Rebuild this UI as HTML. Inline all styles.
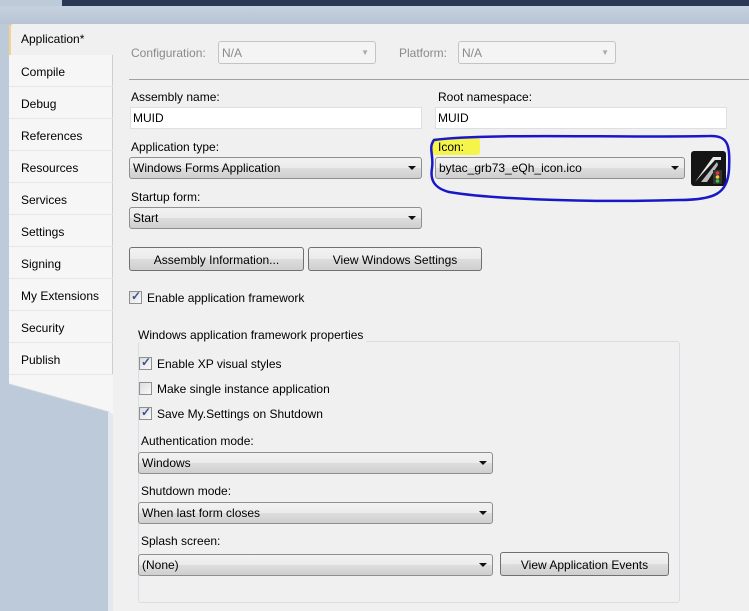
<!DOCTYPE html>
<html><head><style>
*{box-sizing:border-box}
body{margin:0;width:749px;height:611px;overflow:hidden;background:#bccada;font-family:"Liberation Sans",sans-serif;font-size:12px;color:#000;position:relative}
.a{position:absolute}
.lbl{position:absolute;font-size:12px;white-space:nowrap}
.tb{position:absolute;left:130px;width:292px;height:22px;background:#fff;border:1px solid #dcdfe4;padding:3px 2px}
.dd{position:absolute;height:22px;border:1px solid #8e8f8f;border-radius:3px;background:linear-gradient(#f2f2f2,#ebebeb 50%,#dddddd 51%,#cfcfcf);padding:3px 3px;white-space:nowrap}
.dd:after{content:"";position:absolute;right:5px;top:8px;border-left:4px solid transparent;border-right:4px solid transparent;border-top:4px solid #111}
.btn{position:absolute;height:24px;border:1px solid #707070;border-radius:3px;background:linear-gradient(#f2f2f2,#ebebeb 50%,#dddddd 51%,#cfcfcf);text-align:center;padding-top:5px}
.cb{position:absolute;width:13px;height:13px;border:1px solid #8f8f8f;background:linear-gradient(135deg,#dcdcdc,#fafafa)}
.cb.c:after{content:"✓";position:absolute;left:1px;top:-3px;font-size:12px;font-weight:bold;color:#3b4f9a}
.tab{position:absolute;left:9px;width:104px;height:32px;border-bottom:1px solid #e6e6e6;padding:10px 0 0 12px}
</style></head><body>
<div class="a" style="left:62px;top:0;width:687px;height:6px;background:#293955"></div>
<div class="a" style="left:0;top:6px;width:749px;height:18px;background:linear-gradient(#c6d1de,#b8c4d4)"></div>
<div class="a" style="left:108px;top:24px;width:5px;height:587px;background:#e4e9ef"></div>
<!-- tab column -->
<div class="a" style="left:9px;top:24px;width:104px;height:351px;background:#f6f6f6;border-right:1px solid #c9ced6;border-radius:4px 0 0 0"></div>
<svg class="a" style="left:9px;top:374px" width="105" height="40"><polygon points="0,0 104,0 104,40 100,38 0,10" fill="#f6f6f6"/><line x1="0" y1="10" x2="100" y2="38" stroke="#d0d4da"/></svg>
<div class="a" style="left:113px;top:24px;width:636px;height:587px;background:#f0f0f0"></div>
<div class="a" style="left:9px;top:24px;width:106px;height:31px;background:#f0f0f0;border-left:2px solid #f3d48a;border-radius:4px 0 0 0"></div>
<div class="lbl" style="left:21px;top:32px">Application*</div>
<div class="tab" style="top:55px">Compile</div>
<div class="tab" style="top:87px">Debug</div>
<div class="tab" style="top:119px">References</div>
<div class="tab" style="top:151px">Resources</div>
<div class="tab" style="top:183px">Services</div>
<div class="tab" style="top:215px">Settings</div>
<div class="tab" style="top:247px">Signing</div>
<div class="tab" style="top:279px">My Extensions</div>
<div class="tab" style="top:311px">Security</div>
<div class="tab" style="top:343px">Publish</div>
<!-- config -->
<div class="lbl" style="left:131px;top:46px;color:#8a8a8a">Configuration:</div>
<div class="a" style="left:218px;top:41px;width:158px;height:23px;border:1px solid #c4c4c4;border-radius:3px;background:#f4f4f4;color:#8a8a8a;padding:4px 3px">N/A<span style="position:absolute;right:6px;top:6px;font-size:8px;color:#aaa">▼</span></div>
<div class="lbl" style="left:399px;top:46px;color:#8a8a8a">Platform:</div>
<div class="a" style="left:458px;top:41px;width:158px;height:23px;border:1px solid #c4c4c4;border-radius:3px;background:#f4f4f4;color:#8a8a8a;padding:4px 3px">N/A<span style="position:absolute;right:6px;top:6px;font-size:8px;color:#aaa">▼</span></div>
<div class="a" style="left:129px;top:79px;width:620px;height:1px;background:#a0a0a0"></div>
<div class="lbl" style="left:131px;top:90px">Assembly name:</div>
<div class="tb" style="top:107px">MUID</div>
<div class="lbl" style="left:438px;top:90px">Root namespace:</div>
<div class="tb" style="left:435px;top:107px">MUID</div>
<div class="lbl" style="left:131px;top:140px">Application type:</div>
<div class="dd" style="left:129px;top:157px;width:293px">Windows Forms Application</div>
<div class="a" style="left:432px;top:138px;width:48px;height:17px;background:#f4f44a;border-radius:3px"></div>
<div class="lbl" style="left:438px;top:140px">Icon:</div>
<div class="dd" style="left:435px;top:157px;width:250px">bytac_grb73_eQh_icon.ico</div>
<div class="a" style="left:691px;top:151px;width:35px;height:35px;background:#151515;border-radius:3px">
<svg width="35" height="35"><path d="M4 31 L22 6 L30 6 L30 9 L24 9 Z" fill="#e8e8e8"/><path d="M10 31 L26 11 L27 14 L16 31 Z" fill="#bbb"/><rect x="22" y="19" width="9" height="14" fill="#333"/><circle cx="26.5" cy="22" r="1.8" fill="#e33"/><circle cx="26.5" cy="26" r="1.8" fill="#ec3"/><circle cx="26.5" cy="30" r="1.8" fill="#3c3"/></svg></div>
<svg class="a" style="left:424px;top:128px" width="325" height="80"><path d="M10 12 C60 5 200 10 285 8 C305 7 306 18 305 42 C303 65 292 72 255 72 C150 75 60 70 25 64 C10 60 6 52 8 40 C10 27 4 20 10 12 Z" fill="none" stroke="#1818c8" stroke-width="2.5"/></svg>
<div class="lbl" style="left:131px;top:190px">Startup form:</div>
<div class="dd" style="left:129px;top:207px;width:293px">Start</div>
<div class="btn" style="left:129px;top:247px;width:175px">Assembly Information...</div>
<div class="btn" style="left:308px;top:247px;width:174px">View Windows Settings</div>
<div class="cb c" style="left:129px;top:291px"></div>
<div class="lbl" style="left:147px;top:291px">Enable application framework</div>
<div class="a" style="left:138px;top:341px;width:542px;height:262px;border:1px solid #d5dfe5;border-radius:3px"></div>
<div class="lbl" style="left:135px;top:328px;background:#f0f0f0;padding:0 3px">Windows application framework properties</div>
<div class="cb c" style="left:139px;top:357px"></div>
<div class="lbl" style="left:157px;top:357px">Enable XP visual styles</div>
<div class="cb" style="left:139px;top:382px"></div>
<div class="lbl" style="left:157px;top:382px">Make single instance application</div>
<div class="cb c" style="left:139px;top:407px"></div>
<div class="lbl" style="left:157px;top:407px">Save My.Settings on Shutdown</div>
<div class="lbl" style="left:141px;top:434px">Authentication mode:</div>
<div class="dd" style="left:138px;top:452px;width:355px">Windows</div>
<div class="lbl" style="left:141px;top:484px">Shutdown mode:</div>
<div class="dd" style="left:138px;top:502px;width:355px">When last form closes</div>
<div class="lbl" style="left:141px;top:534px">Splash screen:</div>
<div class="dd" style="left:138px;top:554px;width:355px">(None)</div>
<div class="btn" style="left:500px;top:552px;width:169px">View Application Events</div>
</body></html>
